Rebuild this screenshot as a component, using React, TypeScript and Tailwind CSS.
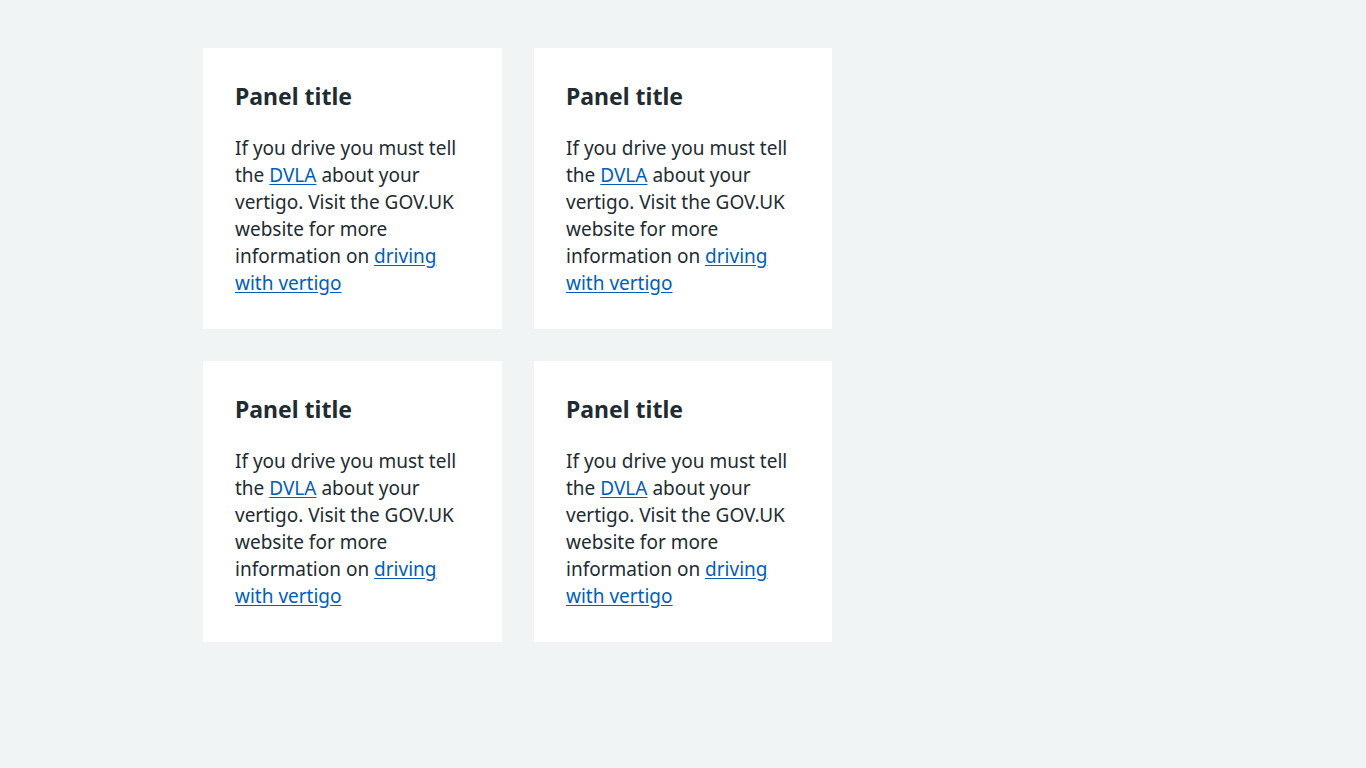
import React from 'react';

const Panel: React.FC = () => (
  <div className="bg-white px-8 pt-8 pb-8">
    <h3 className="text-[23px] leading-[32px] font-bold text-[#212b32] mb-[23px]">Panel title</h3>
    <p className="text-[19px] leading-[27px] text-[#212b32]">
      If you drive you must tell the{' '}
      <a href="#" className="text-[#005eb8] underline underline-offset-2">DVLA</a> about your vertigo. Visit the GOV.UK
      website for more information on{' '}
      <a href="#" className="text-[#005eb8] underline underline-offset-2">driving with vertigo</a>
    </p>
  </div>
);

const App: React.FC = () => {
  return (
    <div className="min-h-screen bg-[#f0f4f5] font-['Noto_Sans',sans-serif] pt-12">
      <div className="w-[960px] mx-auto">
        <div className="grid grid-cols-[299px_298px] gap-8">
          <Panel />
          <Panel />
          <Panel />
          <Panel />
        </div>
      </div>
    </div>
  );
};

export default App;
